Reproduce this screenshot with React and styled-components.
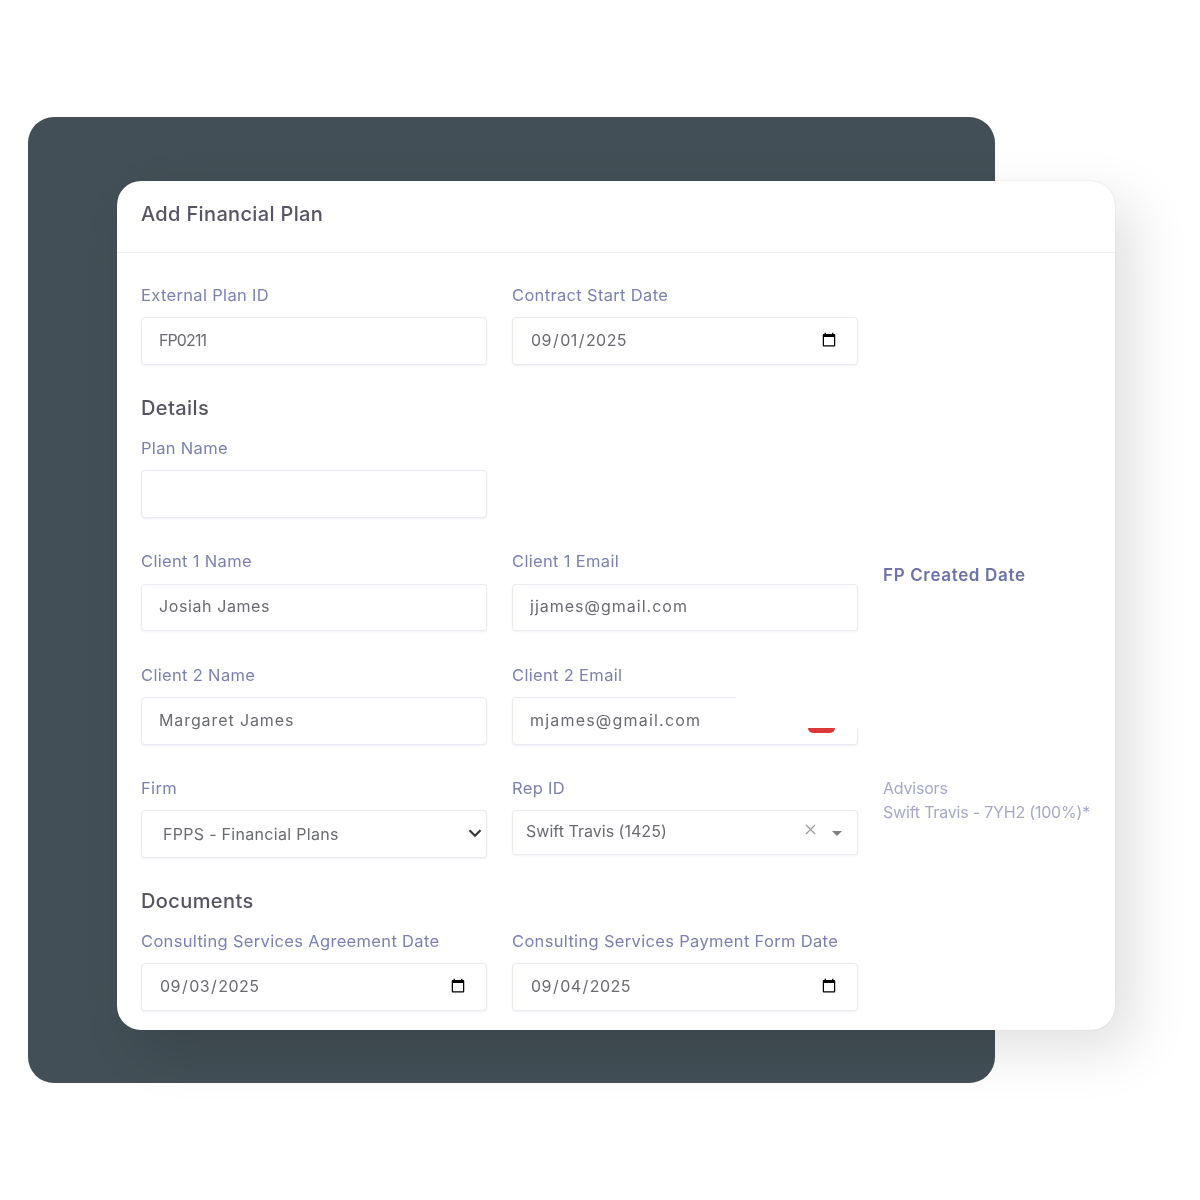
import React from "react";
import styled, { createGlobalStyle } from "styled-components";

const Global = createGlobalStyle`
  html, body { margin: 0; padding: 0; background: #fff; }
  body { font-family: Inter, "Open Sans", "Liberation Sans", sans-serif; }
`;

const soft = "blur(0.5px)";

const Stage = styled.div`
  width: 1200px;
  height: 1200px;
  display: grid;
  overflow: hidden;
  background: #fff;
`;
const Backdrop = styled.div`
  grid-area: 1 / 1;
  width: 967px;
  height: 966px;
  margin: 117px 0 0 28px;
  border-radius: 26px;
  background: #424f56;
`;
const Card = styled.section`
  grid-area: 1 / 1;
  z-index: 1;
  width: 998px;
  height: 849px;
  margin: 181px 0 0 117px;
  border-radius: 24px;
  background: #fff;
  box-shadow: 20px 20px 55px rgba(0, 0, 0, 0.12), 0 0 1px rgba(0, 0, 0, 0.22);
  overflow: hidden;
`;
const Header = styled.header`
  height: 72px;
  box-sizing: border-box;
  padding: 21px 24px 0;
  border-bottom: 1px solid #eef0f6;
`;
const Title = styled.h1`
  margin: 0;
  font-size: 20px;
  line-height: 24px;
  font-weight: 500;
  letter-spacing: 0.35px;
  color: #555465;
  filter: ${soft};
`;
const Body = styled.div`
  padding: 32px 0 0 24px;
  display: grid;
  grid-template-columns: 346px 346px 1fr;
  column-gap: 25px;
  align-items: start;
`;
const Field = styled.div`
  position: relative;
  grid-column: ${(p) => p.$col || "auto"};
  height: ${(p) => p.$h}px;
`;
const Label = styled.label`
  display: block;
  height: 20px;
  margin-bottom: ${(p) => p.$gap ?? 12}px;
  font-size: 16.5px;
  line-height: 20px;
  letter-spacing: 0.33px;
  color: #7c80b0;
  white-space: nowrap;
  filter: ${soft};
`;
const inputCss = `
  display: block;
  box-sizing: border-box;
  width: 346px;
  background: #fff;
  border: 1px solid #e9ebf3;
  border-radius: 4px;
  box-shadow: 0 1px 2px rgba(60, 60, 90, 0.08);
  font-family: Inter, "Open Sans", "Liberation Sans", sans-serif;
  font-size: 16px;
  color: #696b70;
  outline: none;
  filter: blur(0.5px);
`;
const Input = styled.input`
  ${inputCss}
  height: ${(p) => p.$h || 48}px;
  padding: 0 17px ${(p) => p.$lift ?? 3}px;
  letter-spacing: ${(p) => p.$ls ?? 0.6}px;
`;
const DateInput = styled.input`
  ${inputCss}
  height: 48px;
  padding: 0 18px 2px 17px;
  letter-spacing: 0.45px;
  &::-webkit-calendar-picker-indicator {
    opacity: 1;
    margin: 0;
  }
`;
const Select = styled.select`
  ${inputCss}
  appearance: none;
  height: 48px;
  padding: 0 21px;
  letter-spacing: 0.3px;
`;
const Chevron = styled.svg`
  position: absolute;
  left: 327px;
  top: 48px;
  width: 14px;
  height: 14px;
  filter: ${soft};
  pointer-events: none;
`;
const Combo = styled.div`
  ${inputCss}
  height: 45px;
  display: flex;
  align-items: center;
  padding: 0 15px 0 13px;
  letter-spacing: 0.02px;
`;
const ComboValue = styled.span`
  flex: 1;
  white-space: nowrap;
  margin-top: -3px;
`;
const ClearIcon = styled.svg`
  width: 11px;
  height: 11px;
  margin: -6px 16px 0 0;
`;
const Caret = styled.span`
  width: 0;
  height: 0;
  border-left: 5px solid transparent;
  border-right: 5px solid transparent;
  border-top: 5px solid #808080;
  margin-top: 1px;
`;
const Heading = styled.h2`
  grid-column: 1 / -1;
  margin: 0;
  height: ${(p) => p.$h}px;
  font-size: 20px;
  line-height: 24px;
  font-weight: 500;
  letter-spacing: 0.4px;
  color: #555465;
  filter: ${soft};
`;
const Overpaint = styled.div`
  position: absolute;
  left: 224px;
  top: 31px;
  width: 125px;
  height: 32px;
  background: #fff;
`;
const RedTab = styled.div`
  position: absolute;
  left: 296px;
  top: 63px;
  width: 27px;
  height: 5px;
  border-radius: 0 0 7px 7px;
  background: #dd3838;
  filter: ${soft};
`;
const SideHead = styled.div`
  position: absolute;
  left: 0;
  top: 13px;
  font-size: 17px;
  line-height: 22px;
  font-weight: 600;
  letter-spacing: 0.65px;
  color: #6d72a8;
  white-space: nowrap;
  filter: ${soft};
`;
const SideList = styled.div`
  margin-top: -2px;
  font-size: 16px;
  line-height: 24px;
  letter-spacing: -0.2px;
  color: #a5a8cb;
  white-space: nowrap;
  filter: ${soft};
`;

const noop = () => {};

export default function App() {
  return (
    <Stage>
      <Global />
      <Backdrop />
      <Card>
        <Header>
          <Title>Add Financial Plan</Title>
        </Header>
        <Body>
          <Field $h={111}>
            <Label>External Plan ID</Label>
            <Input $ls={-0.9} readOnly value="FP0211" />
          </Field>
          <Field $h={111} $col="2 / span 2">
            <Label>Contract Start Date</Label>
            <DateInput type="date" onChange={noop} value="2025-09-01" />
          </Field>
          <Heading $h={42}>Details</Heading>
          <Field $h={113} $col="1 / -1">
            <Label>Plan Name</Label>
            <Input readOnly value="" />
          </Field>
          <Field $h={114}>
            <Label $gap={13}>Client 1 Name</Label>
            <Input $h={47} $ls={0.6} readOnly value="Josiah James" />
          </Field>
          <Field $h={114}>
            <Label $gap={13}>Client 1 Email</Label>
            <Input $h={47} $ls={1} readOnly value="jjames@gmail.com" />
          </Field>
          <Field $h={114}>
            <SideHead>FP Created Date</SideHead>
          </Field>
          <Field $h={113}>
            <Label>Client 2 Name</Label>
            <Input $ls={0.9} $lift={2} readOnly value="Margaret James" />
          </Field>
          <Field $h={113} $col="2 / span 2">
            <Label>Client 2 Email</Label>
            <Input $ls={1.2} $lift={2} readOnly value="mjames@gmail.com" />
            <Overpaint />
            <RedTab />
          </Field>
          <Field $h={111}>
            <Label>Firm</Label>
            <Select defaultValue="fpps">
              <option value="fpps">FPPS - Financial Plans</option>
            </Select>
            <Chevron viewBox="0 0 14 14">
              <path d="M1.5 4.2L7 9.7l5.5-5.5" stroke="#3a3a3e" strokeWidth="2.3" fill="none" />
            </Chevron>
          </Field>
          <Field $h={111}>
            <Label>Rep ID</Label>
            <Combo>
              <ComboValue>Swift Travis (1425)</ComboValue>
              <ClearIcon viewBox="0 0 11 11">
                <path d="M1 1l9 9M10 1l-9 9" stroke="#9a9a9a" strokeWidth="1.2" fill="none" />
              </ClearIcon>
              <Caret />
            </Combo>
          </Field>
          <Field $h={111}>
            <SideList>
              Advisors
              <br />
              Swift Travis - 7YH2 (100%)*
            </SideList>
          </Field>
          <Heading $h={42}>Documents</Heading>
          <Field $h={90}>
            <Label>Consulting Services Agreement Date</Label>
            <DateInput type="date" onChange={noop} value="2025-09-03" />
          </Field>
          <Field $h={90}>
            <Label>Consulting Services Payment Form Date</Label>
            <DateInput type="date" onChange={noop} value="2025-09-04" />
          </Field>
        </Body>
      </Card>
    </Stage>
  );
}
